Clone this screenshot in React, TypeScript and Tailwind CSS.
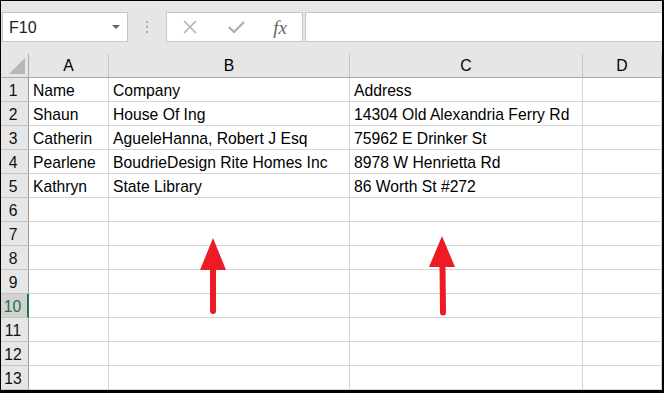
import React from "react";

const rows: string[][] = [
  ["Name", "Company", "Address", ""],
  ["Shaun", "House Of Ing", "14304 Old Alexandria Ferry Rd", ""],
  ["Catherin", "AgueleHanna, Robert J Esq", "75962 E Drinker St", ""],
  ["Pearlene", "BoudrieDesign Rite Homes Inc", "8978 W Henrietta Rd", ""],
  ["Kathryn", "State Library", "86 Worth St #272", ""],
  ["", "", "", ""],
  ["", "", "", ""],
  ["", "", "", ""],
  ["", "", "", ""],
  ["", "", "", ""],
  ["", "", "", ""],
  ["", "", "", ""],
  ["", "", "", ""],
];

const cols = ["A", "B", "C", "D"];

export default function App() {
  return (
    <div
      className="relative w-[664px] h-[393px] overflow-hidden bg-[#e6e6e6] border-t border-l border-r-2 border-b-[3px] border-black text-black"
      style={{ fontFamily: '"Liberation Sans", Arial, sans-serif' }}
    >
      {/* Toolbar */}
      <div className="h-[53px] flex items-start pt-[11px] pl-[1px]">
        <div className="w-[126px] h-[30px] bg-white border border-[#c6c6c6] flex items-center justify-between pl-[6px] pr-[7px]">
          <span className="text-[16px] text-[#222] leading-none pt-[1px]">F10</span>
          <svg width="8" height="4" viewBox="0 0 8 4">
            <path d="M0 0 L8 0 L4 4 Z" fill="#666" />
          </svg>
        </div>
        <div className="w-[38px] h-[30px] flex flex-col items-center justify-center gap-[3px]">
          <div className="w-[2px] h-[2px] rounded-full bg-[#9a9a9a]" />
          <div className="w-[2px] h-[2px] rounded-full bg-[#9a9a9a]" />
          <div className="w-[2px] h-[2px] rounded-full bg-[#9a9a9a]" />
        </div>
        <div className="w-[137px] h-[30px] bg-white border border-[#c6c6c6] flex items-center">
          <div className="w-[46px] flex justify-center">
            <svg width="16" height="14" viewBox="0 0 16 14">
              <path d="M2 1 L14 13 M14 1 L2 13" stroke="#b0b0b0" strokeWidth="1.6" fill="none" />
            </svg>
          </div>
          <div className="w-[46px] flex justify-center">
            <svg width="17" height="12" viewBox="0 0 17 12">
              <path d="M1 6 L6 11 L16 1" stroke="#b0b0b0" strokeWidth="2.4" fill="none" />
            </svg>
          </div>
          <div className="w-[42px] flex justify-center">
            <span
              className="italic text-[19px] leading-none text-[#666]"
              style={{ fontFamily: '"Liberation Serif", "Times New Roman", serif' }}
            >
              fx
            </span>
          </div>
        </div>
        <div className="ml-[2px] flex-1 h-[30px] bg-white border-y border-l border-[#c6c6c6]" />
      </div>

      {/* Grid */}
      <div className="grid grid-cols-[28px_80px_241px_233px_79px] text-[15.7px] leading-[18px]">
        {/* header row */}
        <div className="h-[24px] bg-[#e6e6e6] border-r border-b border-[#ababab] relative">
          <svg className="absolute right-[3px] bottom-[3px]" width="16" height="16" viewBox="0 0 16 16">
            <path d="M16 0 L16 16 L0 16 Z" fill="#b8b8b8" />
          </svg>
        </div>
        {cols.map((c) => (
          <div
            key={c}
            className="h-[24px] bg-[#e6e6e6] border-r border-r-[#c4c4c4] border-b border-b-[#ababab] flex items-center justify-center pt-[1px]"
          >
            {c}
          </div>
        ))}
        {rows.map((r, i) => {
          const sel = i === 9;
          return (
            <React.Fragment key={i}>
              <div
                className={
                  sel
                    ? "h-[24px] bg-[#d2d2d2] border-b border-b-[#c4c4c4] border-r-2 border-r-[#217346] flex items-end justify-center pb-[1px] pr-[3px] text-[#217346]"
                    : "h-[24px] bg-[#e6e6e6] border-b border-b-[#c4c4c4] border-r border-r-[#9b9b9b] flex items-end justify-center pb-[1px] pr-[3px] text-[#111]"
                }
              >
                {i + 1}
              </div>
              {r.map((v, j) => (
                <div
                  key={j}
                  className="h-[24px] bg-white border-r border-b border-[#d4d4d4] flex items-end pl-[4px] pb-[1px] whitespace-nowrap overflow-hidden"
                >
                  {v}
                </div>
              ))}
            </React.Fragment>
          );
        })}
      </div>

      {/* Arrows overlay */}
      <svg
        className="absolute left-[-1px] top-[-1px] pointer-events-none"
        width="664"
        height="393"
        viewBox="0 0 664 393"
      >
        <path d="M213 238 L226 270 L200 270 Z" fill="#ed1c24" />
        <line x1="213" y1="268" x2="213" y2="311" stroke="#ed1c24" strokeWidth="6" strokeLinecap="round" />
        <path d="M442 236 L455 267 L429 267 Z" fill="#ed1c24" />
        <line x1="442.5" y1="265" x2="443" y2="312.5" stroke="#ed1c24" strokeWidth="6" strokeLinecap="round" />
      </svg>
    </div>
  );
}
